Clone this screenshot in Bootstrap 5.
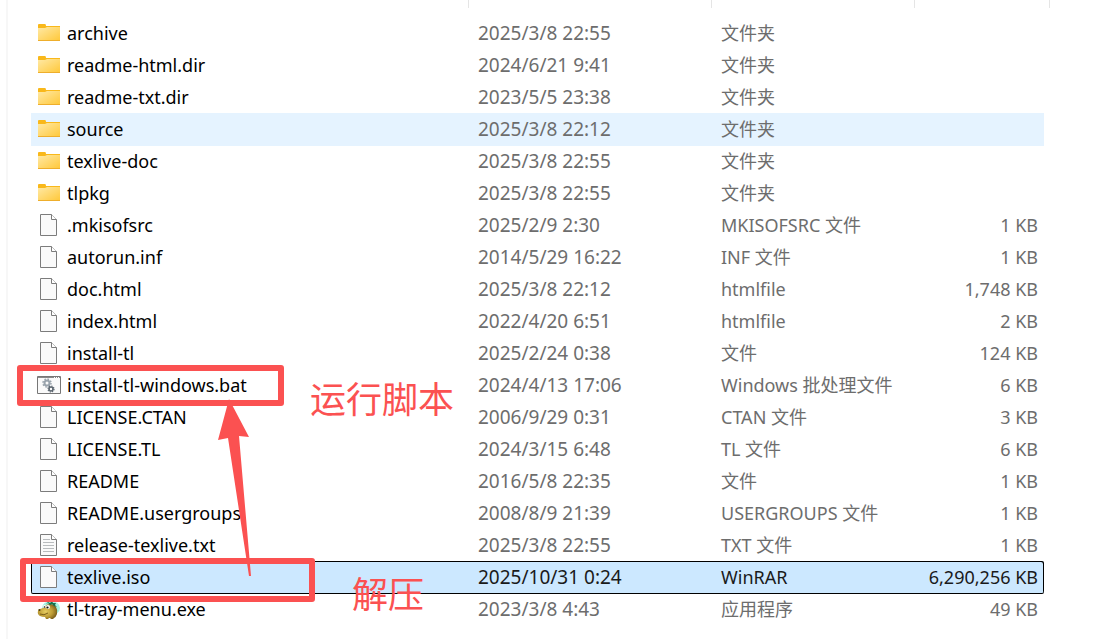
<!DOCTYPE html>
<html lang="zh-CN">
<head>
<meta charset="utf-8">
<meta name="viewport" content="width=device-width, initial-scale=1">
<title>texlive</title>
<link href="https://cdn.jsdelivr.net/npm/bootstrap@5.3.0/dist/css/bootstrap.min.css" rel="stylesheet">
<style>
  body { font-family: "Noto Sans", "Noto Sans CJK SC", sans-serif; font-size: 18px; line-height: 24px; color: #000; background: #fff; }
  .pane { margin-left: 6px; border-left: 2px solid #f7f7f7; padding: 0 57px 0 23px; min-height: 100vh; }
  .files { border-collapse: separate; border-spacing: 0; table-layout: fixed; }
  .files > :not(caption) > * > * { padding: 0; background: transparent; box-shadow: none; color: #6d6d6d; }
  .files thead th { height: 8px; border-right: 1px solid #e5e5e5; line-height: 0; }
  .files thead th:last-child { position: relative; border-right: 0; }
  .files thead th:last-child::after { content: ""; position: absolute; top: 0; bottom: 0; right: -6px; width: 1px; background: #e5e5e5; }
  .files tbody::before { content: ""; display: table-row; height: 9px; }
  .files tbody td { height: 32px; white-space: nowrap; padding-left: 9px; }
  .files tbody td:first-child { padding-left: 6px; color: #000; }
  .files tbody td:last-child { padding-right: 6px; text-align: right; }
  .files tbody td:nth-child(2) { font-size: 19px; }
  .col-date { width: 243px; }
  .col-type { width: 203px; }
  .col-size { width: 129px; }
  .files tr.hovered > td { background: #e5f3ff; box-shadow: 0 1px #e5f3ff; }
  .files tr.picked > td { background: #cce8ff; color: #1a1a1a; box-shadow: inset 0 1px #000, 0 1px #000; }
  .files tr.picked > td:first-child { color: #000; box-shadow: inset 1px 1px #000, 0 1px #000; border-radius: 2px 0 0 2px; }
  .files tr.picked > td:last-child { box-shadow: inset -1px 1px #000, 0 1px #000; border-radius: 0 2px 2px 0; }
  .entry { display: flex; align-items: center; gap: 6px; }
  .entry svg { width: 24px; height: 24px; flex: none; }
  .marks { top: 0; left: 0; pointer-events: none; }
  .note { color: #fb5151; font-family: "Noto Sans CJK SC", sans-serif; font-size: 36px; line-height: 40px; white-space: nowrap; }
  .note-run { left: 310px; top: 377px; }
  .note-unpack { left: 352px; top: 572px; }
</style>
</head>
<body>
<svg class="position-absolute" width="0" height="0" aria-hidden="true">
  <defs>
    <linearGradient id="gold" x1="0" y1="0" x2="1" y2="1"><stop offset="0" stop-color="#ffe9a6"/><stop offset="1" stop-color="#ffc93c"/></linearGradient>
    <radialGradient id="fur" cx=".4" cy=".5" r=".65"><stop offset="0" stop-color="#e6cd62"/><stop offset=".55" stop-color="#bd9c35"/><stop offset="1" stop-color="#6e5215"/></radialGradient>
    <symbol id="folder" viewBox="0 0 24 24">
      <path d="M1 4q0-1 1-1h6q1 0 1 2h14v15H1z" fill="#f9b81a"/>
      <path d="M1 7h7l2-1h13v13H1z" fill="url(#gold)"/>
      <path d="M1 19.500h22" stroke="#eeae2c"/>
    </symbol>
    <symbol id="file" viewBox="0 0 24 24">
      <path d="M3.500 1.500h11l5 5v16h-16z" fill="#fafafa" stroke="#7c7c7c"/>
      <path d="M14.500 1.500v5h5" fill="#fff" stroke="#7c7c7c"/>
    </symbol>
    <symbol id="txt" viewBox="0 0 24 24">
      <use href="#file"/>
      <path d="M6 6.500h7M6 9.500h11M6 12.500h11M6 15.500h11M6 18.500h11" stroke="#b9bcbe"/>
    </symbol>
    <symbol id="bat" viewBox="0 0 24 24">
      <path d="M.500 3.500h23v17H.500z" fill="#fafafa" stroke="#777"/>
      <path d="M1 4.500h22" stroke="#888"/>
      <path d="M17 4.500h1m1 0h1m1 0h1" stroke="#fff"/>
      <circle cx="10" cy="10" r="2.500" fill="none" stroke="#9aa4ad" stroke-width="2"/>
      <circle cx="10" cy="10" r="4" fill="none" stroke="#9aa4ad" stroke-width="1.500" stroke-dasharray="1.600 1.540"/>
      <circle cx="14" cy="16" r="2" fill="none" stroke="#5c6670" stroke-width="1.600"/>
      <circle cx="14" cy="16" r="3" fill="none" stroke="#5c6670" stroke-width="1.200" stroke-dasharray="1.200 1.150"/>
    </symbol>
    <symbol id="lion" viewBox="0 0 24 24">
      <ellipse cx="14" cy="11" rx="9" ry="7" fill="#a6f2e2"/>
      <path d="M8 9q2-2 5-2 4 0 6 3 2 3 1 7-1 3-3 4l-1 1h-2l-1-1h-1l-1 1h-2l-1-2q-3 0-5-1-3-2-2-5 0-2 2-2 3 0 5-3z" fill="url(#fur)"/>
      <path d="M9 7l2-2 2 1 2-2 1 2 3 0-1 2 2 2-3-1-2-2-2 1-2-2z" fill="#17704c"/>
      <path d="M3 17q4 2 8-1" fill="none" stroke="#7d611c"/>
      <circle cx="7.500" cy="9.500" r="1.500" fill="#fff"/><circle cx="11" cy="10" r="2" fill="#fff"/>
      <circle cx="7.500" cy="10" r=".8" fill="#111"/><circle cx="10.500" cy="10.500" r="1.100" fill="#111"/>
      <circle cx="2.500" cy="13" r="1" fill="#493b12"/>
    </symbol>
  </defs>
</svg>

<main class="position-relative overflow-hidden">
  <div class="pane">
    <table class="table table-borderless align-middle files mb-0">
      <colgroup><col><col class="col-date"><col class="col-type"><col class="col-size"></colgroup>
      <thead><tr><th></th><th></th><th></th><th></th></tr></thead>
      <tbody>
        <tr><td><div class="entry"><svg><use href="#folder"/></svg>archive</div></td><td>2025/3/8 22:55</td><td>文件夹</td><td></td></tr>
        <tr><td><div class="entry"><svg><use href="#folder"/></svg>readme-html.dir</div></td><td>2024/6/21 9:41</td><td>文件夹</td><td></td></tr>
        <tr><td><div class="entry"><svg><use href="#folder"/></svg>readme-txt.dir</div></td><td>2023/5/5 23:38</td><td>文件夹</td><td></td></tr>
        <tr class="hovered"><td><div class="entry"><svg><use href="#folder"/></svg>source</div></td><td>2025/3/8 22:12</td><td>文件夹</td><td></td></tr>
        <tr><td><div class="entry"><svg><use href="#folder"/></svg>texlive-doc</div></td><td>2025/3/8 22:55</td><td>文件夹</td><td></td></tr>
        <tr><td><div class="entry"><svg><use href="#folder"/></svg>tlpkg</div></td><td>2025/3/8 22:55</td><td>文件夹</td><td></td></tr>
        <tr><td><div class="entry"><svg><use href="#file"/></svg>.mkisofsrc</div></td><td>2025/2/9 2:30</td><td>MKISOFSRC 文件</td><td>1 KB</td></tr>
        <tr><td><div class="entry"><svg><use href="#file"/></svg>autorun.inf</div></td><td>2014/5/29 16:22</td><td>INF 文件</td><td>1 KB</td></tr>
        <tr><td><div class="entry"><svg><use href="#file"/></svg>doc.html</div></td><td>2025/3/8 22:12</td><td>htmlfile</td><td>1,748 KB</td></tr>
        <tr><td><div class="entry"><svg><use href="#file"/></svg>index.html</div></td><td>2022/4/20 6:51</td><td>htmlfile</td><td>2 KB</td></tr>
        <tr><td><div class="entry"><svg><use href="#file"/></svg>install-tl</div></td><td>2025/2/24 0:38</td><td>文件</td><td>124 KB</td></tr>
        <tr><td><div class="entry"><svg><use href="#bat"/></svg>install-tl-windows.bat</div></td><td>2024/4/13 17:06</td><td>Windows 批处理文件</td><td>6 KB</td></tr>
        <tr><td><div class="entry"><svg><use href="#file"/></svg>LICENSE.CTAN</div></td><td>2006/9/29 0:31</td><td>CTAN 文件</td><td>3 KB</td></tr>
        <tr><td><div class="entry"><svg><use href="#file"/></svg>LICENSE.TL</div></td><td>2024/3/15 6:48</td><td>TL 文件</td><td>6 KB</td></tr>
        <tr><td><div class="entry"><svg><use href="#file"/></svg>README</div></td><td>2016/5/8 22:35</td><td>文件</td><td>1 KB</td></tr>
        <tr><td><div class="entry"><svg><use href="#file"/></svg>README.usergroups</div></td><td>2008/8/9 21:39</td><td>USERGROUPS 文件</td><td>1 KB</td></tr>
        <tr><td><div class="entry"><svg><use href="#txt"/></svg>release-texlive.txt</div></td><td>2025/3/8 22:55</td><td>TXT 文件</td><td>1 KB</td></tr>
        <tr class="picked"><td><div class="entry"><svg><use href="#file"/></svg>texlive.iso</div></td><td>2025/10/31 0:24</td><td>WinRAR</td><td>6,290,256 KB</td></tr>
        <tr><td><div class="entry"><svg><use href="#lion"/></svg>tl-tray-menu.exe</div></td><td>2023/3/8 4:43</td><td>应用程序</td><td>49 KB</td></tr>
      </tbody>
    </table>
  </div>

  <svg class="marks position-absolute" width="330" height="620" fill="none" stroke="#fb5151" stroke-width="6" stroke-linejoin="round" aria-hidden="true">
    <rect x="20" y="368" width="261" height="35"/>
    <rect x="23" y="561" width="289" height="38"/>
    <path d="M229 399L218 440l10-2 21 138h2L239 436l10 1z" fill="#fb5151" stroke="none"/>
  </svg>
  <span class="note note-run position-absolute">运行脚本</span>
  <span class="note note-unpack position-absolute">解压</span>
</main>
<script src="https://cdn.jsdelivr.net/npm/bootstrap@5.3.0/dist/js/bootstrap.bundle.min.js"></script>
</body>
</html>
